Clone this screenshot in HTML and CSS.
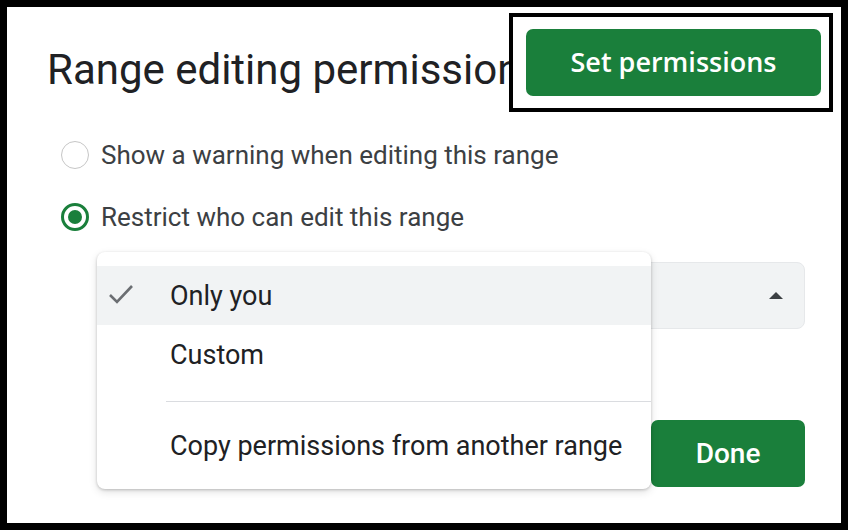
FILE: index.html
```html
<!DOCTYPE html>
<html>
<head>
<meta charset="utf-8">
<link rel="stylesheet" href="styles.css">
</head>
<body>
<div class="frame">
  <div class="header">
    <div class="title">Range editing permissions</div>
    <div class="callout">
      <div class="btn btn-set">Set permissions</div>
    </div>
  </div>
  <div class="options">
    <div class="opt">
      <span class="radio"></span>
      <span class="label">Show a warning when editing this range</span>
    </div>
    <div class="opt">
      <span class="radio checked"></span>
      <span class="label">Restrict who can edit this range</span>
    </div>
  </div>
  <div class="select">
    <svg class="arrow" width="14" height="7" viewBox="0 0 14 7"><path d="M0 7 L7 0 L14 7 Z" fill="#3c4043"/></svg>
  </div>
  <div class="done-row">
    <div class="btn btn-done">Done</div>
  </div>
  <div class="menu">
    <div class="item active">
      <svg class="check" width="26" height="20" viewBox="0 0 26 20"><path d="M2 11 L9 18 L24 2" fill="none" stroke="#6b6e72" stroke-width="2.6" stroke-linecap="butt" stroke-linejoin="miter"/></svg>
      <span>Only you</span>
    </div>
    <div class="item"><span>Custom</span></div>
    <div class="sep"></div>
    <div class="item"><span>Copy permissions from another range</span></div>
  </div>
</div>
</body>
</html>
```
FILE: styles.css
```css
* { box-sizing: border-box; }
html, body { margin: 0; padding: 0; background: #fff; }
body { font-family: Roboto, "Liberation Sans", sans-serif; }
.frame {
  position: relative;
  width: 848px;
  height: 530px;
  border: 7px solid #000;
  background: #fff;
  overflow: hidden;
}
.header {
  display: flex;
  align-items: flex-start;
  height: 105px;
}
.title {
  flex: 1;
  min-width: 0;
  overflow: hidden;
  white-space: nowrap;
  padding-left: 40px;
  margin-top: 39px;
  font-size: 42px;
  line-height: 48px;
  color: #202124;
}
.callout {
  flex: none;
  width: 324px;
  height: 99px;
  margin-top: 6px;
  margin-right: 8px;
  border: 4px solid #000;
  background: #fff;
  padding: 12px 8px 12px 13px;
}
.btn {
  background: #1a7f3b;
  color: #fff;
  border-radius: 7px;
  display: flex;
  align-items: center;
  justify-content: center;
}
.btn-set {
  width: 295px;
  height: 67px;
  font-family: "Open Sans", Roboto, sans-serif;
  font-weight: 600;
  font-size: 27px;
  padding-bottom: 3px;
}
.options {
  margin-top: 29px;
  padding-left: 54px;
  display: flex;
  flex-direction: column;
  gap: 34px;
}
.opt {
  display: flex;
  align-items: center;
  height: 28px;
  gap: 12px;
}
.radio {
  width: 28px;
  height: 28px;
  border-radius: 50%;
  border: 1.5px solid #c6c6c6;
  flex: none;
  display: flex;
  align-items: center;
  justify-content: center;
}
.radio.checked {
  border: 3px solid #1a7f3b;
}
.radio.checked::after {
  content: "";
  width: 14px;
  height: 14px;
  border-radius: 50%;
  background: #1a7f3b;
}
.label {
  font-size: 26px;
  color: #3c4043;
}
.select {
  margin-top: 31px;
  margin-left: 93px;
  width: 705px;
  height: 67px;
  background: #f1f3f4;
  border: 1px solid #e6e8ea;
  border-radius: 8px;
  display: flex;
  align-items: center;
  justify-content: flex-end;
  padding-right: 21px;
}
.done-row {
  margin-top: 91px;
  display: flex;
  justify-content: flex-end;
  padding-right: 36px;
}
.btn-done {
  width: 154px;
  height: 67px;
  font-size: 28px;
  font-weight: 500;
}
.menu {
  position: absolute;
  left: 90px;
  top: 245px;
  width: 554px;
  height: 237px;
  background: #fff;
  border-radius: 8px;
  box-shadow: 0 1px 3px rgba(0,0,0,0.2), 0 3px 8px rgba(0,0,0,0.12);
  padding: 14px 0 13px;
}
.item {
  height: 60px;
  display: flex;
  align-items: center;
  padding-left: 73px;
  position: relative;
  font-size: 27px;
  color: #202124;
}
.item.active {
  height: 59px;
  background: #f1f3f4;
}
.check {
  position: absolute;
  left: 11px;
  top: 18px;
}
.sep {
  height: 1px;
  background: #dadce0;
  margin: 16px 0 14px 69px;
}
```
